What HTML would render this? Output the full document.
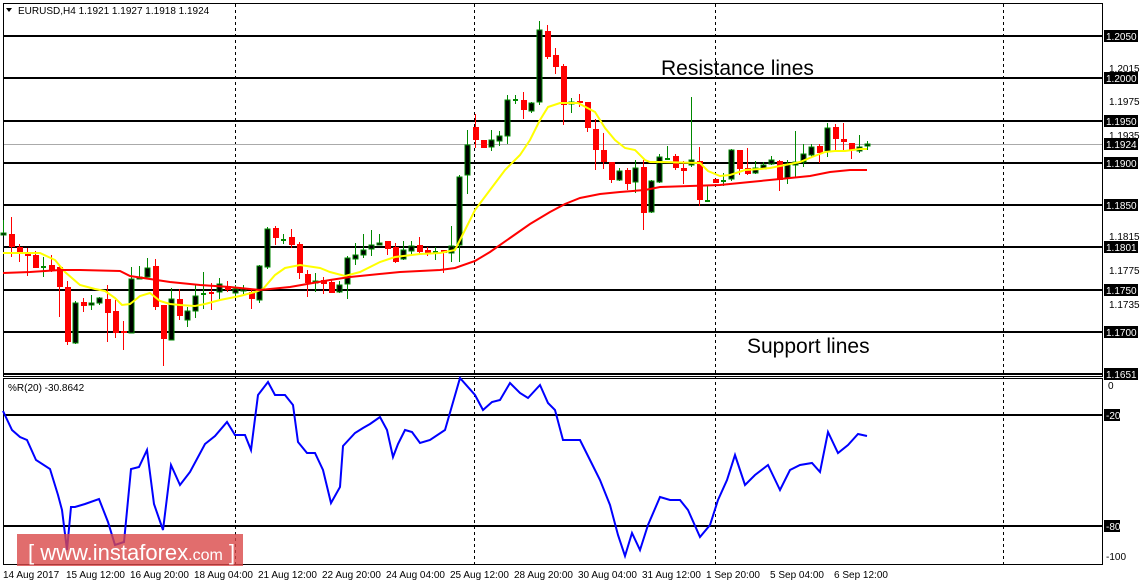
<!DOCTYPE html>
<html><head><meta charset="utf-8"><style>
body{margin:0;background:#fff;width:1143px;height:585px;overflow:hidden;font-family:"Liberation Sans",sans-serif}
svg{position:absolute;left:0;top:0}
text{font-family:"Liberation Sans",sans-serif;font-size:10px}
</style></head><body>
<svg id="s" width="1143" height="585" viewBox="0 0 1143 585">
<rect width="1143" height="585" fill="#fff"/>
<g stroke="#000" stroke-width="1" fill="none">
<rect x="3.5" y="3.5" width="1099" height="373"/>
<rect x="3.5" y="378.5" width="1099" height="186"/>
</g>
<g stroke="#000" stroke-width="1" stroke-dasharray="3,3">
<line x1="235.5" y1="4" x2="235.5" y2="564"/><line x1="474.5" y1="4" x2="474.5" y2="564"/>
<line x1="715.5" y1="4" x2="715.5" y2="564"/><line x1="1003.5" y1="4" x2="1003.5" y2="564"/>
</g>
<line x1="4" y1="144.5" x2="1102" y2="144.5" stroke="#aaa"/>
<g stroke="#000" stroke-width="2">
<line x1="4" y1="36" x2="1102" y2="36"/><line x1="4" y1="78" x2="1102" y2="78"/>
<line x1="4" y1="121" x2="1102" y2="121"/><line x1="4" y1="163" x2="1102" y2="163"/>
<line x1="4" y1="205" x2="1102" y2="205"/><line x1="4" y1="247" x2="1102" y2="247"/>
<line x1="4" y1="290" x2="1102" y2="290"/><line x1="4" y1="332" x2="1102" y2="332"/>
<line x1="4" y1="374" x2="1102" y2="374"/>
<line x1="4" y1="415" x2="1102" y2="415"/><line x1="4" y1="526" x2="1102" y2="526"/>
</g>
<g id="c"></g>
<polyline fill="none" stroke="#ff0" stroke-width="2" points="3,253 40,253 55,260 65,272 80,285 95,289 105,291 115,298 122,305 130,304 140,296 150,293 160,301 170,304 180,305 195,306 205,304 220,300 240,296 255,292 263,289 275,275 285,268 300,265 320,268 330,272 345,276 360,272 380,262 395,257 420,254 440,253 455,250 465,230 475,210 490,190 505,170 520,155 530,140 540,120 548,107 560,103 578,103 595,112 605,128 615,140 625,148 635,150 645,160 650,162 660,162 700,163 708,171 720,176 730,175 745,170 760,169 770,168 780,166 800,162 812,157 825,152 835,151 845,151 860,149 867,149"/>
<polyline fill="none" stroke="#f00" stroke-width="2" points="3,273 30,272 60,270 80,270 120,271 130,276 170,282 200,285 230,287 260,290 290,287 330,280 350,277 400,272 440,270 455,268 475,261 490,252 510,238 530,224 550,212 565,204 580,198 600,194 620,192 645,190 660,187 690,186 720,185 750,182 780,179 810,176 830,172 850,170 867,170"/>
<polyline fill="none" stroke="#00f" stroke-width="2" points="3,411 12,430 20,437 27,440 36,460 50,469 58,495 62,510 67,550 71,507 75,507 85,504 99,499 108,522 115,545 124,542 131,469 139,467 147,450 154,504 163,530 171,465 180,485 190,472 205,444 215,436 227,422 235,435 245,435 251,450 258,395 268,382 275,395 285,395 293,405 298,442 307,453 315,453 323,470 331,503 340,487 343,446 355,433 363,428 370,424 380,417 387,430 393,457 398,444 405,430 412,432 420,443 430,440 445,430 460,378 475,395 483,410 492,402 500,400 510,383 520,393 528,398 540,385 548,403 555,410 563,440 570,440 580,440 590,460 600,480 610,505 618,535 625,556 632,533 640,550 648,525 660,497 670,500 680,500 688,510 700,537 710,525 718,500 727,480 735,455 745,485 755,475 768,465 780,490 790,470 800,465 812,463 820,472 828,432 838,453 848,445 858,434 867,436"/>
<rect x="17" y="534" width="226" height="32" fill="rgba(218,72,72,0.8)"/>
<text x="28" y="560" fill="#fff" style="font-size:22px">[ www.instaforex<tspan style="font-size:16px">.com</tspan> ]</text>
<text x="661" y="75" fill="#000" style="font-size:21px">Resistance lines</text>
<text x="747" y="353" fill="#000" style="font-size:21px">Support lines</text>
<path d="M6 8 L12 8 L9 12 Z" fill="#000"/>
<text x="18" y="14" fill="#000">EURUSD,H4  1.1921 1.1927 1.1918 1.1924</text>
<text x="8" y="391" fill="#000">%R(20) -30.8642</text>
<g fill="#000">
<text x="1109" y="72">1.2015</text><text x="1109" y="105">1.1975</text><text x="1109" y="139">1.1935</text>
<text x="1109" y="240">1.1815</text><text x="1109" y="274">1.1775</text><text x="1109" y="308">1.1735</text>
<text x="1108" y="389">0</text><text x="1106" y="560">-100</text>
</g>
<g id="lb"></g>
<g fill="#000" style="font-size:10px">
<text x="3" y="578">14 Aug 2017</text><text x="66" y="578">15 Aug 12:00</text><text x="130" y="578">16 Aug 20:00</text>
<text x="194" y="578">18 Aug 04:00</text><text x="258" y="578">21 Aug 12:00</text><text x="322" y="578">22 Aug 20:00</text>
<text x="386" y="578">24 Aug 04:00</text><text x="450" y="578">25 Aug 12:00</text><text x="514" y="578">28 Aug 20:00</text>
<text x="578" y="578">30 Aug 04:00</text><text x="642" y="578">31 Aug 12:00</text><text x="706" y="578">1 Sep 20:00</text>
<text x="770" y="578">5 Sep 04:00</text><text x="834" y="578">6 Sep 12:00</text>
</g>
</svg>
<script>
var C=[[3,'g',233,235,220,235],[11,'r',234,247,217,257],[19,'r',247,254,244,262],[27,'r',252,256,248,276],[35,'r',255,268,251,268],[43,'g',266,266,257,277],[51,'r',265,270,255,272],[59,'r',267,287,265,317],[67,'r',287,342,281,345],[75,'g',303,343,301,344],[83,'r',302,306,298,312],[91,'g',303,305,295,310],[99,'g',298,303,297,305],[107,'r',299,313,285,342],[115,'r',311,333,300,338],[123,'r',331,333,321,350],[131,'g',279,333,267,333],[139,'g',277,279,266,279],[147,'g',268,277,258,277],[155,'r',266,307,259,310],[163,'r',305,339,305,366],[171,'g',299,340,288,340],[179,'r',299,316,289,320],[187,'g',311,320,307,327],[195,'g',296,311,285,318],[203,'g',293,293,272,309],[211,'r',292,293,283,310],[219,'g',284,292,278,299],[227,'r',286,290,281,292],[235,'g',289,293,285,296],[243,'g',289,291,285,294],[251,'r',292,299,290,309],[259,'g',266,300,265,303],[267,'g',229,267,227,269],[275,'r',228,238,226,245],[283,'g',239,239,234,244],[291,'r',237,245,229,248],[299,'r',244,273,242,279],[307,'r',274,283,270,297],[315,'g',281,283,273,292],[323,'r',280,284,277,294],[331,'r',282,293,280,293],[339,'g',285,292,281,293],[347,'g',258,284,256,299],[355,'g',255,259,243,265],[363,'g',250,255,234,258],[371,'g',245,249,230,256],[379,'g',243,245,234,245],[387,'r',241,249,241,255],[395,'r',247,262,243,263],[403,'g',250,259,241,260],[411,'g',246,251,241,256],[419,'r',245,252,237,255],[427,'r',250,253,247,256],[435,'g',251,251,247,260],[443,'r',250,253,250,273],[451,'g',246,253,226,262],[459,'g',177,245,175,262],[467,'g',145,175,130,194],[475,'r',127,140,114,148],[483,'r',140,148,140,148],[491,'g',140,147,130,151],[499,'g',136,141,131,146],[507,'g',100,136,95,144],[515,'g',99,99,95,104],[523,'r',100,110,92,119],[531,'g',103,111,102,113],[539,'g',30,102,21,105],[547,'r',31,57,25,59],[555,'r',55,67,48,74],[563,'r',66,105,64,125],[571,'g',102,104,98,113],[579,'r',101,103,94,107],[587,'r',102,128,102,132],[595,'r',129,150,119,170],[603,'r',150,162,133,169],[611,'r',162,180,162,183],[619,'g',171,180,168,181],[627,'r',170,184,168,190],[635,'g',168,182,160,193],[643,'r',167,213,160,230],[651,'g',181,212,180,213],[659,'g',157,182,154,183],[667,'g',158,158,146,160],[675,'r',156,168,154,170],[683,'r',168,171,161,184],[691,'g',160,165,97,167],[699,'r',161,200,147,206],[707,'g',200,200,185,202],[715,'r',179,183,179,183],[723,'g',180,180,173,186],[731,'g',150,179,149,181],[739,'r',150,169,150,175],[747,'r',168,174,148,175],[755,'g',168,173,161,174],[763,'g',165,169,162,169],[771,'g',160,164,156,165],[779,'r',161,180,160,191],[787,'g',164,178,160,184],[795,'g',162,165,131,177],[803,'g',154,162,144,167],[811,'g',147,155,144,157],[819,'r',146,153,144,163],[827,'g',128,152,123,157],[835,'r',127,139,124,150],[843,'r',139,142,123,152],[851,'r',143,150,143,159],[859,'g',147,151,135,153],[867,'g',144,146,141,150]];
var h='';C.forEach(function(c){var x=c[0],t=c[2],b=c[3];var col=c[1]=='g'?'#080':'#f00';
h+='<line x1="'+(x+.5)+'" y1="'+c[4]+'" x2="'+(x+.5)+'" y2="'+c[5]+'" stroke="'+col+'"/>';
if(b-t<2){h+='<rect x="'+(x-2)+'" y="'+t+'" width="5" height="2" fill="'+col+'"/>';}
else if(c[1]=='g'){h+='<rect x="'+(x-2)+'" y="'+t+'" width="5" height="'+(b-t)+'" fill="#000" stroke="#080"/>';}
else{h+='<rect x="'+(x-2)+'" y="'+t+'" width="6" height="'+(b-t)+'" fill="#f00"/>';}});
document.getElementById('c').innerHTML=h;
var L=[[36,'1.2050'],[78,'1.2000'],[121,'1.1950'],[144,'1.1924'],[163,'1.1900'],[205,'1.1850'],[247,'1.1801'],[290,'1.1750'],[332,'1.1700'],[374,'1.1651'],[415,'-20'],[526,'-80']];
var g='';L.forEach(function(l){var w=l[1].length>3?34:16;g+='<rect x="1104" y="'+(l[0]-6)+'" width="'+w+'" height="12" fill="#000"/><text x="1106" y="'+(l[0]+4)+'" fill="#fff">'+l[1]+'</text>';});
document.getElementById('lb').innerHTML=g;
</script>
</body></html>
